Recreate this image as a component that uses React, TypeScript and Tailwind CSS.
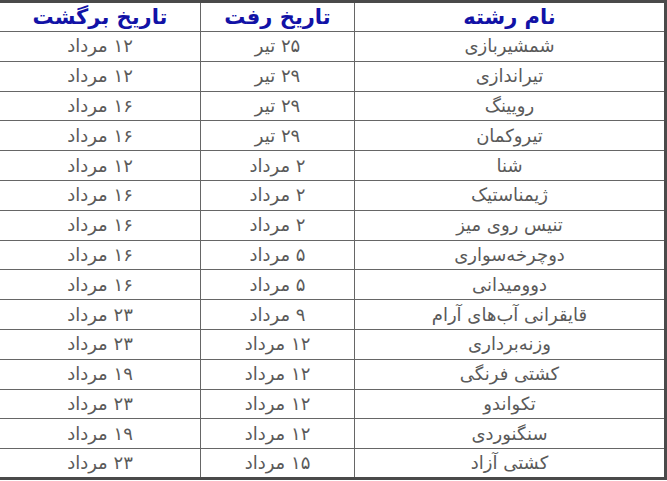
const rows: [string, string, string][] = [
  ['شمشیربازی', '۲۵ تیر', '۱۲ مرداد'],
  ['تیراندازی', '۲۹ تیر', '۱۲ مرداد'],
  ['رویینگ', '۲۹ تیر', '۱۶ مرداد'],
  ['تیروکمان', '۲۹ تیر', '۱۶ مرداد'],
  ['شنا', '۲ مرداد', '۱۲ مرداد'],
  ['ژیمناستیک', '۲ مرداد', '۱۶ مرداد'],
  ['تنیس روی میز', '۲ مرداد', '۱۶ مرداد'],
  ['دوچرخه‌سواری', '۵ مرداد', '۱۶ مرداد'],
  ['دوومیدانی', '۵ مرداد', '۱۶ مرداد'],
  ['قایقرانی آب‌های آرام', '۹ مرداد', '۲۳ مرداد'],
  ['وزنه‌برداری', '۱۲ مرداد', '۲۳ مرداد'],
  ['کشتی فرنگی', '۱۲ مرداد', '۱۹ مرداد'],
  ['تکواندو', '۱۲ مرداد', '۲۳ مرداد'],
  ['سنگنوردی', '۱۲ مرداد', '۱۹ مرداد'],
  ['کشتی آزاد', '۱۵ مرداد', '۲۳ مرداد'],
];

export default function App() {
  return (
    <div className="w-[667px] h-[481px] bg-white" dir="rtl">
      <table
        className="w-[667px] border-collapse border-[3px] border-[#4a4a4a] table-fixed"
        style={{ fontFamily: '"DejaVu Sans", "Noto Sans", sans-serif' }}
      >
        <colgroup>
          <col className="w-[311px]" />
          <col className="w-[154px]" />
          <col className="w-[202px]" />
        </colgroup>
        <thead>
          <tr className="h-[30px]">
            <th className="border border-[#666] text-[21px] font-bold text-[#1212a6] text-center p-0 leading-none">نام رشته</th>
            <th className="border border-[#666] text-[21px] font-bold text-[#1212a6] text-center p-0 leading-none">تاریخ رفت</th>
            <th className="border border-[#666] text-[21px] font-bold text-[#1212a6] text-center p-0 leading-none">تاریخ برگشت</th>
          </tr>
        </thead>
        <tbody>
          {rows.map((r, i) => (
            <tr key={i} className="h-[29.8px]">
              {r.map((c, j) => (
                <td key={j} className="border border-[#666] text-[18px] text-[#5a5a5a] text-center p-0 leading-none">
                  {c}
                </td>
              ))}
            </tr>
          ))}
        </tbody>
      </table>
    </div>
  );
}
